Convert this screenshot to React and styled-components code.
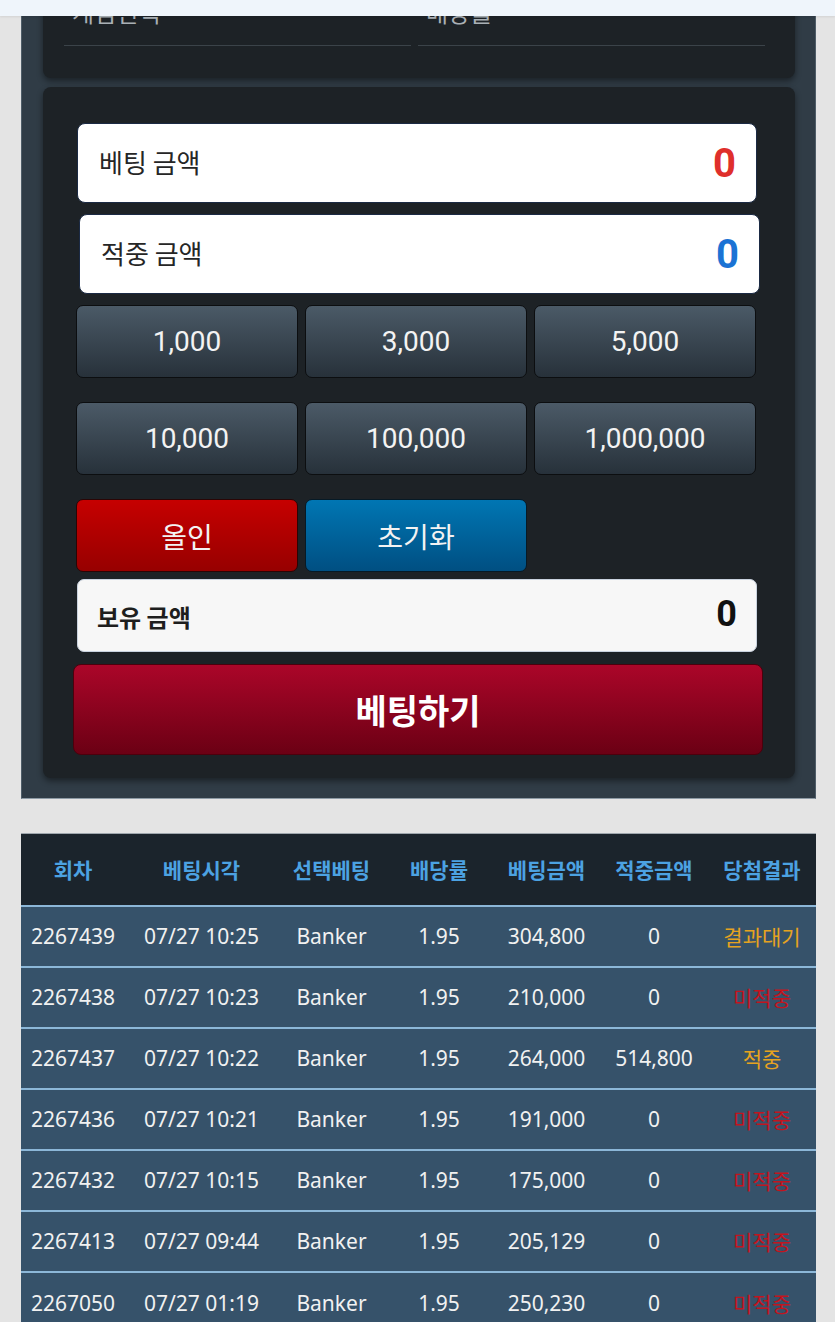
import React from 'react';
import styled, { createGlobalStyle } from 'styled-components';

const GlobalStyle = createGlobalStyle`
  html, body { margin: 0; padding: 0; background: #e4e4e4; }
  body { font-family: "Noto Sans", "Noto Sans CJK KR", sans-serif; overflow: hidden; }
  * { box-sizing: border-box; }
`;

const TopBar = styled.div`
  position: fixed;
  top: 0;
  left: 0;
  right: 0;
  height: 16px;
  background: #eff5fb;
  box-shadow: 0 1px 2px rgba(0, 0, 0, 0.08);
  z-index: 10;
`;

const Page = styled.div`
  padding: 0 19px 40px 21px;
`;

const Panel = styled.section`
  margin-top: -44px;
  background: #303c46;
  padding: 21px 20px 20px 21px;
  display: flex;
  flex-direction: column;
  gap: 9px;
  border: 1px solid #4f5d68;
  border-top: none;
  border-bottom-color: #8d9aa4;
`;

const Card = styled.div`
  background: #1d2226;
  border-radius: 8px;
  box-shadow: 0 3px 6px rgba(0, 0, 0, 0.45);
`;

const SelectCard = styled(Card)`
  padding: 20px 30px 32px 21px;
  display: grid;
  grid-template-columns: 1fr 1fr;
  column-gap: 7px;
`;

const Field = styled.div`
  padding: 0 8px 18px;
  border-bottom: 1px solid #3b4349;
  font-family: "Noto Sans CJK KR", sans-serif;
  font-size: 24px;
  line-height: 30px;
  color: #a9b0b5;
`;

const BetCard = styled(Card)`
  padding: 36px 39px 23px 33px;
  display: flex;
  flex-direction: column;
`;

const AmountBox = styled.div`
  height: 80px;
  background: #ffffff;
  border: 1px solid #1b2a44;
  border-radius: 8px;
  display: flex;
  align-items: center;
  justify-content: space-between;
  padding: 0 20px 0 21px;
  margin: ${(p) => (p.$shift ? '11px -4px 0 3px' : '0 -1px 0 1px')};
`;

const AmountLabel = styled.span`
  font-family: "Noto Sans CJK KR", sans-serif;
  font-size: 26px;
  color: #262626;
  margin-top: -3px;
`;

const AmountValue = styled.span`
  font-family: Roboto, "Noto Sans", sans-serif;
  font-weight: 700;
  font-size: 40px;
  color: ${(p) => p.$color};
`;

const ChipGrid = styled.div`
  margin-top: 11px;
  display: grid;
  grid-template-columns: repeat(3, 1fr);
  column-gap: 7px;
  row-gap: 24px;
`;

const tones = {
  dark: { from: '#4b5a67', to: '#27313a', border: '#0c0e10' },
  red: { from: '#c60000', to: '#970000', border: '#2a0505' },
  blue: { from: '#0076b3', to: '#004f82', border: '#061a26' },
};

const ChipButton = styled.button`
  height: 73px;
  border: 1px solid ${(p) => tones[p.$tone].border};
  border-radius: 7px;
  background: linear-gradient(${(p) => tones[p.$tone].from}, ${(p) => tones[p.$tone].to});
  color: #f3f3f3;
  font-family: ${(p) => (p.$tone === 'dark' ? 'Roboto, "Noto Sans", sans-serif' : '"Noto Sans CJK KR", sans-serif')};
  font-size: ${(p) => (p.$tone === 'dark' ? '28px' : '28px')};
  padding: 0;
  cursor: pointer;
`;

const HoldBox = styled.div`
  margin: 7px -1px 0 1px;
  height: 73px;
  background: #f7f7f7;
  border: 1px solid #c9d2de;
  border-radius: 7px;
  display: flex;
  align-items: center;
  justify-content: space-between;
  padding: 0 19px 0 19px;
`;

const HoldLabel = styled.span`
  font-family: "Noto Sans CJK KR", sans-serif;
  font-weight: 700;
  font-size: 24px;
  color: #1e1e1e;
  margin-top: 2px;
`;

const HoldValue = styled.span`
  font-family: Roboto, sans-serif;
  font-weight: 700;
  font-size: 36px;
  color: #111;
  margin-top: -4px;
`;

const BetButton = styled.button`
  margin: 12px -7px 0 -3px;
  height: 91px;
  border-radius: 8px;
  border: 1px solid #4c000c;
  background: linear-gradient(#ab0629, #6b0014);
  color: #fff;
  font-family: "Noto Sans CJK KR", sans-serif;
  font-weight: 700;
  font-size: 34px;
  cursor: pointer;
`;

const Table = styled.table`
  margin-top: 34px;
  width: 100%;
  border-collapse: collapse;
  table-layout: fixed;
  border-top: 1px solid #9ea6ad;
`;

const HeadCell = styled.th`
  height: 72px;
  background: #1b242c;
  color: #4ca2e2;
  font-family: "Noto Sans CJK KR", sans-serif;
  font-weight: 700;
  font-size: 21px;
  text-align: center;
  padding: 0;
`;

const Cell = styled.td`
  height: 61px;
  background: #36526a;
  border-top: 2px solid #8cb7d8;
  color: ${(p) => p.$color || '#f1f1f1'};
  font-family: "Noto Sans", "Noto Sans CJK KR", sans-serif;
  font-size: 21px;
  text-align: center;
  padding: 0;
  white-space: nowrap;
`;

const widths = [104, 153, 107, 108, 107, 108, 108];
const headers = ['회차', '베팅시각', '선택베팅', '배당률', '베팅금액', '적중금액', '당첨결과'];

const rows = [
  ['2267439', '07/27 10:25', '304,800', '0', '결과대기'],
  ['2267438', '07/27 10:23', '210,000', '0', '미적중'],
  ['2267437', '07/27 10:22', '264,000', '514,800', '적중'],
  ['2267436', '07/27 10:21', '191,000', '0', '미적중'],
  ['2267432', '07/27 10:15', '175,000', '0', '미적중'],
  ['2267413', '07/27 09:44', '205,129', '0', '미적중'],
  ['2267050', '07/27 01:19', '250,230', '0', '미적중'],
];

const resultColor = (r) => (r === '미적중' ? '#c2141e' : '#e6a31f');

export default function App() {
  return (
    <>
      <GlobalStyle />
      <TopBar />
      <Page>
        <Panel>
          <SelectCard>
            <Field>게임선택</Field>
            <Field>배당률</Field>
          </SelectCard>
          <BetCard>
            <AmountBox>
              <AmountLabel>베팅 금액</AmountLabel>
              <AmountValue $color="#df2f2b">0</AmountValue>
            </AmountBox>
            <AmountBox $shift>
              <AmountLabel>적중 금액</AmountLabel>
              <AmountValue $color="#1b73d4">0</AmountValue>
            </AmountBox>
            <ChipGrid>
              {['1,000', '3,000', '5,000', '10,000', '100,000', '1,000,000'].map((v) => (
                <ChipButton key={v} $tone="dark">{v}</ChipButton>
              ))}
              <ChipButton $tone="red">올인</ChipButton>
              <ChipButton $tone="blue">초기화</ChipButton>
            </ChipGrid>
            <HoldBox>
              <HoldLabel>보유 금액</HoldLabel>
              <HoldValue>0</HoldValue>
            </HoldBox>
            <BetButton>베팅하기</BetButton>
          </BetCard>
        </Panel>
        <Table>
          <colgroup>
            {widths.map((w, i) => (
              <col key={i} style={{ width: w }} />
            ))}
          </colgroup>
          <thead>
            <tr>
              {headers.map((h) => (
                <HeadCell key={h}>{h}</HeadCell>
              ))}
            </tr>
          </thead>
          <tbody>
            {rows.map((r) => (
              <tr key={r[0]}>
                <Cell>{r[0]}</Cell>
                <Cell>{r[1]}</Cell>
                <Cell>Banker</Cell>
                <Cell>1.95</Cell>
                <Cell>{r[2]}</Cell>
                <Cell>{r[3]}</Cell>
                <Cell $color={resultColor(r[4])}>{r[4]}</Cell>
              </tr>
            ))}
          </tbody>
        </Table>
      </Page>
    </>
  );
}
